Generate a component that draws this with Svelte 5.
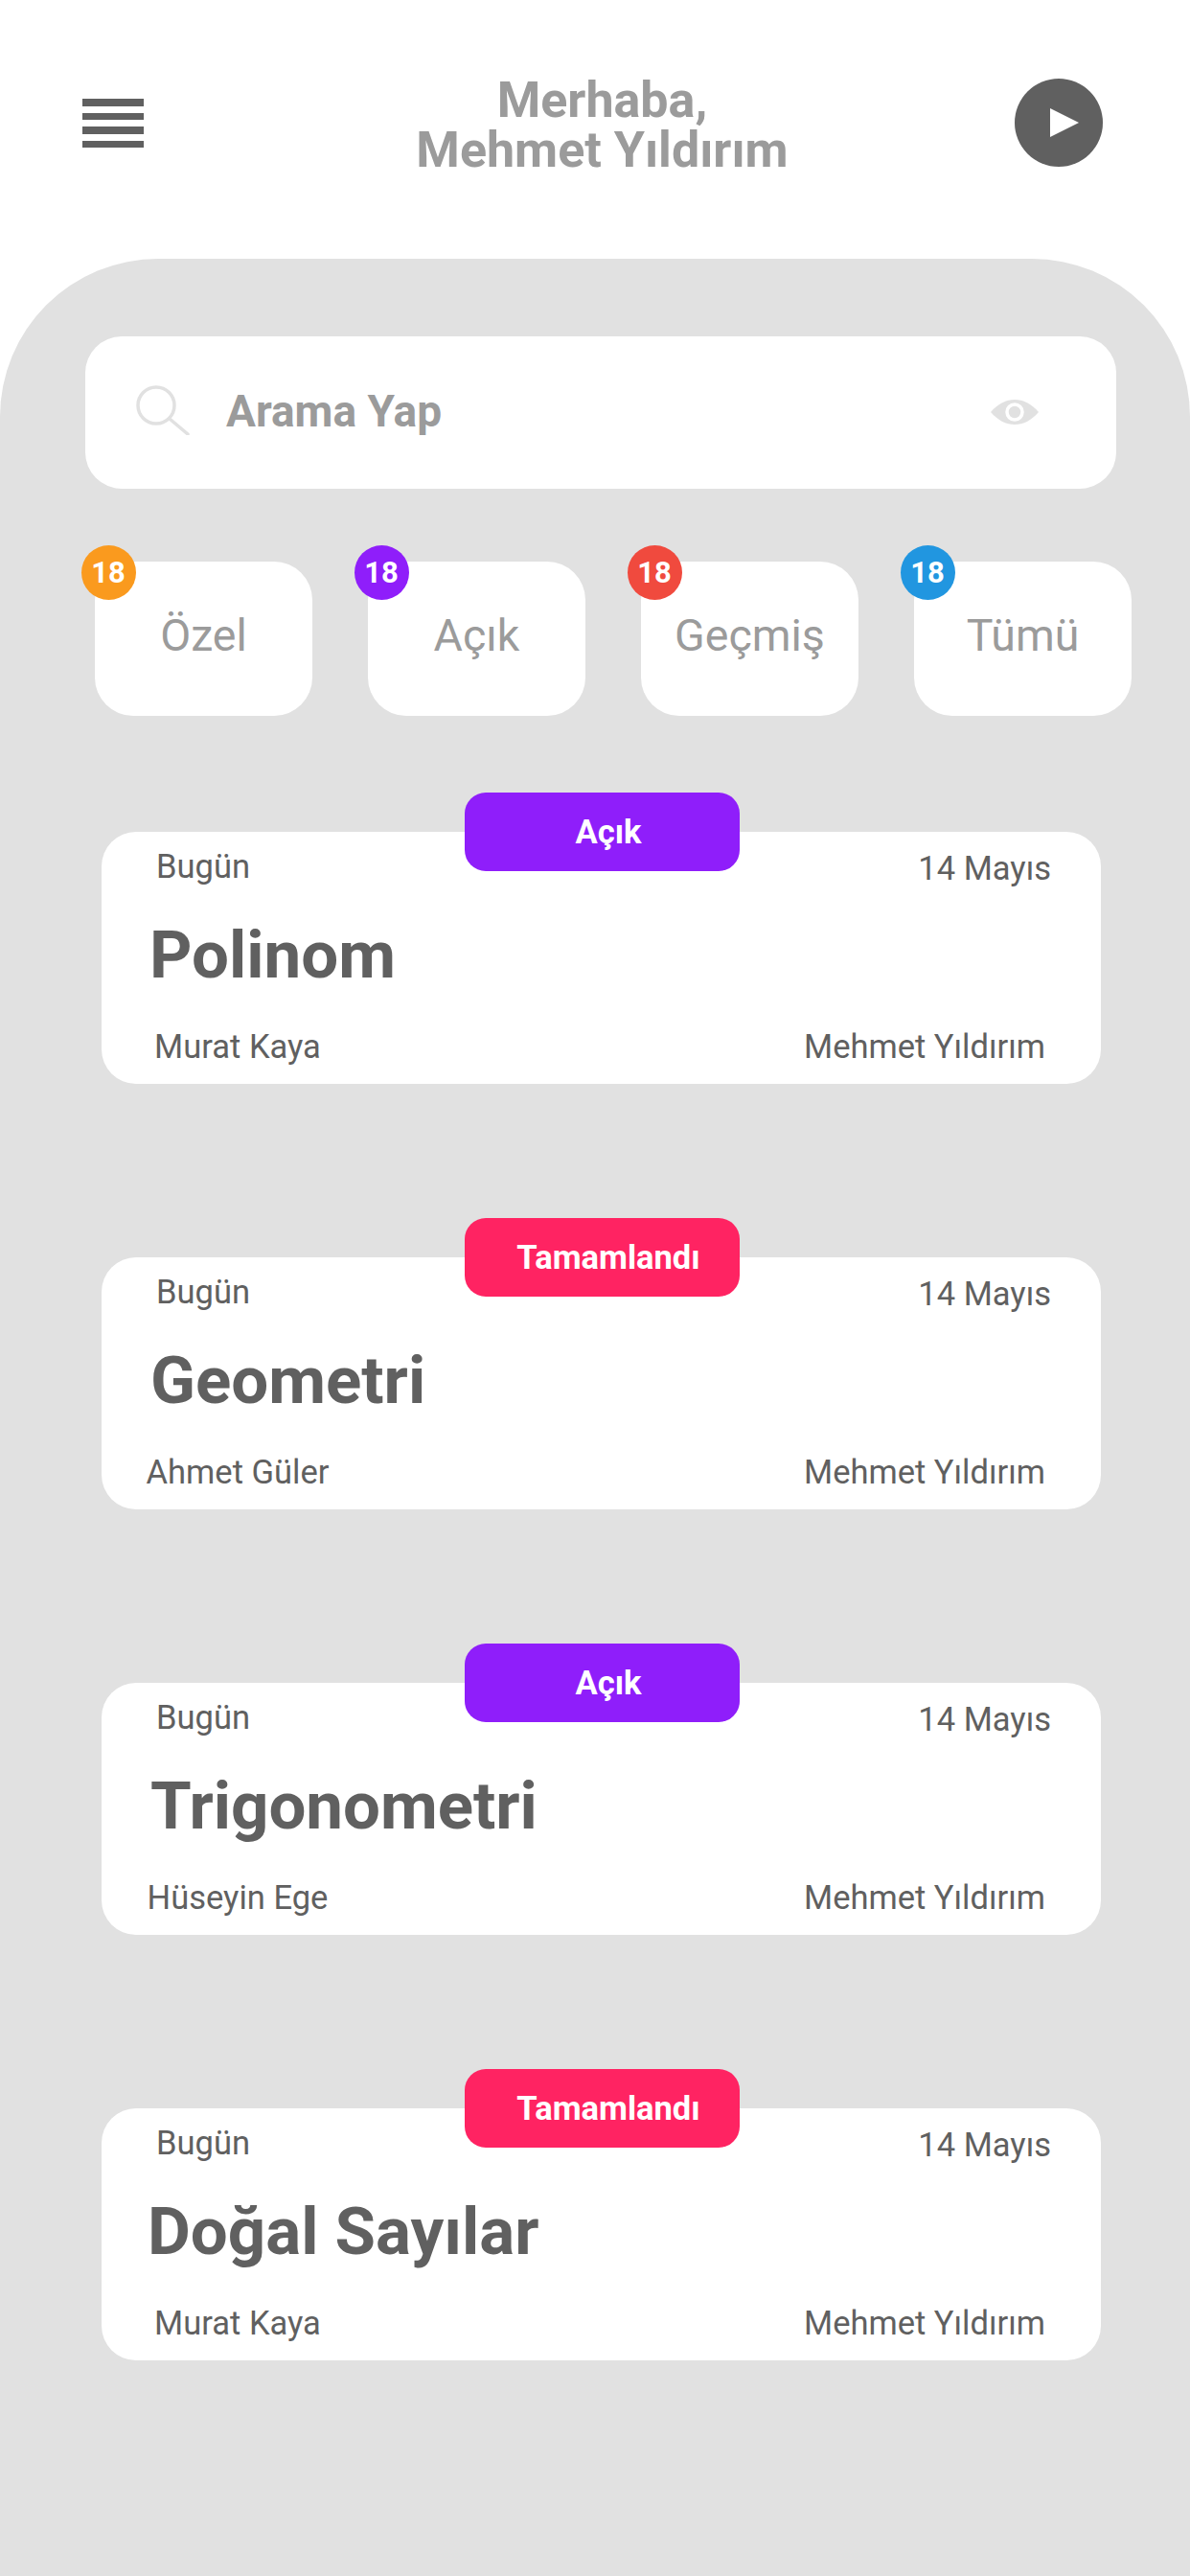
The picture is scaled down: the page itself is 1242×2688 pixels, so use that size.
<script lang="ts">
	const filters = [
		{ label: 'Özel', count: 18, color: '#fa9a1e' },
		{ label: 'Açık', count: 18, color: '#8f1efa' },
		{ label: 'Geçmiş', count: 18, color: '#f04a3e' },
		{ label: 'Tümü', count: 18, color: '#2196e0' }
	];

	const lessons = [
		{ title: 'Polinom', teacher: 'Murat Kaya', status: 'Açık', kind: 'open', shift: -7 },
		{ title: 'Geometri', teacher: 'Ahmet Güler', status: 'Tamamlandı', kind: 'done', shift: -6 },
		{ title: 'Trigonometri', teacher: 'Hüseyin Ege', status: 'Açık', kind: 'open', shift: -6 },
		{ title: 'Doğal Sayılar', teacher: 'Murat Kaya', status: 'Tamamlandı', kind: 'done', shift: -9 }
	];
</script>

<div class="page">
	<header class="top">
		<div class="burger">
			<span></span>
			<span></span>
			<span></span>
			<span></span>
		</div>
		<h1>Merhaba,<br />Mehmet Yıldırım</h1>
		<div class="play">
			<svg width="30" height="30" viewBox="0 0 30 30"><path d="M0 0 L30 15 L0 30 Z" fill="#fff" /></svg>
		</div>
	</header>

	<main class="panel">
		<div class="search">
			<svg class="search-icon" width="56" height="52" viewBox="0 0 56 52" fill="none" stroke="#e1e1e1" stroke-width="3.5">
				<circle cx="21" cy="21" r="19" />
				<path d="M35 35 L54 51" stroke-linecap="round" />
			</svg>
			<span class="placeholder">Arama Yap</span>
			<svg class="eye" width="50" height="26" viewBox="0 0 50 26">
				<path d="M0 13 C8 4 16 0 25 0 C34 0 42 4 50 13 C42 22 34 26 25 26 C16 26 8 22 0 13 Z" fill="#e1e1e1" />
				<circle cx="25" cy="13" r="8" fill="#e1e1e1" stroke="#fff" stroke-width="3.5" />
			</svg>
		</div>

		<div class="filters">
			{#each filters as f}
				<div class="chip">
					<span class="badge" style="background: {f.color}">{f.count}</span>
					{f.label}
				</div>
			{/each}
		</div>

		<div class="cards">
			{#each lessons as l}
				<article class="card">
					<span class="pill {l.kind}">{l.status}</span>
					<div class="row first">
						<span>Bugün</span>
						<span class="date">14 Mayıs</span>
					</div>
					<h2 style="margin-left: {l.shift}px">{l.title}</h2>
					<div class="row last">
						<span class="teacher">{l.teacher}</span>
						<span>Mehmet Yıldırım</span>
					</div>
				</article>
			{/each}
		</div>
	</main>
</div>

<style>
	:global(body) {
		margin: 0;
		background: #fff;
	}
	.page {
		width: 1242px;
		height: 2688px;
		overflow: hidden;
		display: flex;
		flex-direction: column;
		font-family: Roboto, 'Liberation Sans', sans-serif;
	}
	.top {
		height: 270px;
		box-sizing: border-box;
		padding: 82px 91px 0 86px;
		display: grid;
		grid-template-columns: 64px 1fr 92px;
		align-items: start;
	}
	.burger {
		margin-top: 21px;
		display: flex;
		flex-direction: column;
		gap: 7px;
	}
	.burger span {
		height: 7.5px;
		background: #606060;
	}
	h1 {
		margin: -3px 0 0;
		padding-left: 48px;
		text-align: center;
		font-size: 52px;
		line-height: 52px;
		font-weight: 700;
		color: #9b9b9b;
	}
	.play {
		width: 92px;
		height: 92px;
		border-radius: 50%;
		background: #606060;
		display: flex;
		align-items: center;
		justify-content: center;
		padding-left: 12px;
		box-sizing: border-box;
	}
	.panel {
		flex: 1;
		background: #e1e1e1;
		border-radius: 165px 165px 0 0;
		padding-top: 81px;
	}
	.search {
		margin: 0 77px 0 89px;
		height: 159px;
		background: #fff;
		border-radius: 38px;
		display: flex;
		align-items: center;
		box-sizing: border-box;
		padding: 0 81px 0 53px;
	}
	.search-icon {
		margin-bottom: 5px;
	}
	.placeholder {
		margin: 0 0 3px 38px;
		font-size: 46px;
		font-weight: 700;
		color: #9b9b9b;
	}
	.eye {
		margin-left: auto;
		margin-bottom: 2px;
	}
	.filters {
		margin-top: 76px;
		padding-left: 99px;
		display: flex;
		gap: 58px;
	}
	.chip {
		position: relative;
		flex: none;
		width: 227px;
		height: 161px;
		box-sizing: border-box;
		padding-bottom: 8px;
		border-radius: 40px;
		background: #fff;
		color: #9b9b9b;
		font-size: 46.5px;
		display: flex;
		align-items: center;
		justify-content: center;
	}
	.badge {
		position: absolute;
		left: -14.5px;
		top: -17px;
		width: 57px;
		height: 57px;
		border-radius: 50%;
		color: #fff;
		font-size: 31px;
		font-weight: 700;
		display: flex;
		align-items: center;
		justify-content: center;
	}
	.cards {
		margin-top: 121px;
		padding: 0 93px 0 106px;
		display: flex;
		flex-direction: column;
		gap: 181px;
	}
	.card {
		position: relative;
		height: 263px;
		box-sizing: border-box;
		background: #fff;
		border-radius: 36px;
		padding: 16px 52px 0 57px;
		color: #606060;
		font-size: 34.5px;
	}
	.pill {
		position: absolute;
		left: 379px;
		top: -41px;
		width: 287px;
		height: 82px;
		box-sizing: border-box;
		padding-left: 13px;
		border-radius: 22px;
		color: #fff;
		font-size: 34.5px;
		font-weight: 700;
		display: flex;
		align-items: center;
		justify-content: center;
	}
	.pill.open {
		background: #8f1efa;
	}
	.pill.done {
		background: #ff2362;
	}
	.row {
		display: flex;
		justify-content: space-between;
		line-height: 40px;
	}
	.date {
		position: relative;
		top: 2px;
	}
	.row.last {
		margin-top: 35px;
		padding-right: 6px;
	}
	.teacher {
		width: 200px;
		margin-left: -15px;
		text-align: center;
		white-space: nowrap;
	}
	h2 {
		margin: 0;
		padding-top: 33px;
		font-size: 69px;
		line-height: 80px;
		font-weight: 700;
	}
</style>
